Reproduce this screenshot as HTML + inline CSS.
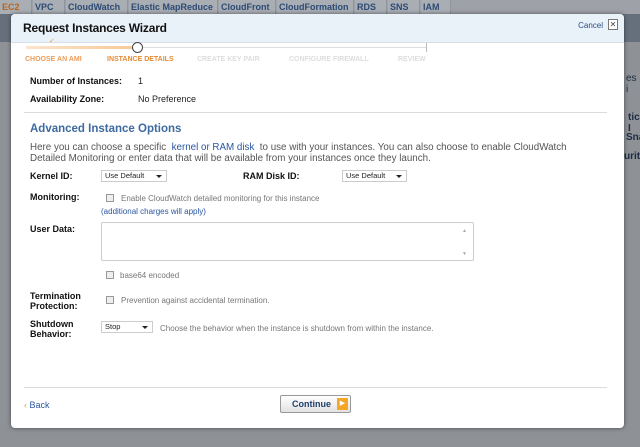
<!DOCTYPE html>
<html style="background:#8e9196"><head><style>
*{margin:0;padding:0;box-sizing:border-box}
html,body{width:640px;height:447px;overflow:hidden;background:#8e9196}
body{font-family:"Liberation Sans",Tahoma,sans-serif;position:relative;font-size:9px;color:#222}
.bg{position:absolute;left:0;top:0;width:640px;height:447px;background:#8e9196}
.tabs{position:absolute;left:0;top:0;width:640px;height:14px;background:#9ea2a8}
.tab{position:absolute;top:0;height:14px;font-size:9px;font-weight:bold;color:#2c4a74;line-height:14px;background:#a9aeb5;border-right:1px solid #8f959c;padding:0 2px}
.bgtext{position:absolute;color:#1d2c44;font-weight:bold;font-size:10px}
.modal{position:absolute;left:11px;top:14px;width:613px;height:414px;background:#fff;border-radius:4px;box-shadow:0 0 4px rgba(0,0,0,.5);overflow:hidden}
.hdr{height:29px;background:#e9f1f9;border-bottom:1px solid #d6dee8;position:relative}
.hdr h1{position:absolute;left:12px;top:7px;font-size:12px;font-weight:bold;color:#111;letter-spacing:-0.2px}
.cancel{position:absolute;right:21px;top:7px;font-size:8px;color:#2a4f8a}
.x{position:absolute;right:6px;top:5px;width:10px;height:11px;border:1px solid #777;font-size:8px;line-height:9px;text-align:center;color:#444;background:#fff}
.a{position:absolute}
.lbl{position:absolute;font-weight:bold;font-size:9px;color:#111;line-height:10px}
.sel{position:absolute;height:12px;border:1px solid #ccc;font-size:7.5px;line-height:10px;padding-left:3px;background:#fff}
.sel:after{content:"";position:absolute;right:4px;top:4px;border:3px solid transparent;border-top:3px solid #222}
.cb{position:absolute;width:8px;height:8px;border:1px solid #999;background:#eee}
.g{color:#777;font-size:8px}
.hr{position:absolute;left:13px;width:583px;height:1px;background:#dcdcdc}
</style></head><body>
<div class="bg"></div>
<div class="tabs">
<div class="tab" style="left:0;width:32px;color:#b8651f">EC2</div>
<div class="tab" style="left:33px;width:32px">VPC</div>
<div class="tab" style="left:66px;width:62px">CloudWatch</div>
<div class="tab" style="left:129px;width:89px">Elastic MapReduce</div>
<div class="tab" style="left:219px;width:57px">CloudFront</div>
<div class="tab" style="left:277px;width:77px">CloudFormation</div>
<div class="tab" style="left:355px;width:32px">RDS</div>
<div class="tab" style="left:388px;width:32px">SNS</div>
<div class="tab" style="left:421px;width:30px">IAM</div>
</div>
<div style="position:absolute;left:0;top:14px;width:640px;height:28px;background:#66707d"></div>
<div class="bgtext" style="left:626px;top:73px;font-weight:normal">es i</div>
<div class="bgtext" style="left:628px;top:112px">tic I</div>
<div class="bgtext" style="left:626px;top:132px">Sna</div>
<div class="bgtext" style="left:624px;top:151px">urity</div>
<div class="modal">
<div class="hdr"><h1>Request Instances Wizard</h1><span class="cancel">Cancel</span><div class="x">✕</div></div>
<div class="a" style="left:15px;top:32px;width:112px;height:3px;background:linear-gradient(90deg,#fbe4cc,#f8c896)"></div>
<div class="a" style="left:127px;top:33px;width:289px;height:1px;background:#ddd"></div>
<div class="a" style="left:415px;top:29px;width:1px;height:9px;background:#bbb"></div>
<div class="a" style="left:121px;top:28px;width:11px;height:11px;border:1.5px solid #444;border-radius:50%;background:#fff"></div>
<div class="a" style="left:38px;top:23px;font-size:7px;color:#e79a54">✓</div>
<div class="a" style="left:14px;top:42px;font-size:7px;font-weight:bold;color:#eb9c5a">CHOOSE AN AMI</div>
<div class="a" style="left:96px;top:42px;font-size:7px;font-weight:bold;color:#e68a32">INSTANCE DETAILS</div>
<div class="a" style="left:186px;top:42px;font-size:7px;font-weight:bold;color:#ddd">CREATE KEY PAIR</div>
<div class="a" style="left:278px;top:42px;font-size:7px;font-weight:bold;color:#ddd">CONFIGURE FIREWALL</div>
<div class="a" style="left:387px;top:42px;font-size:7px;font-weight:bold;color:#ddd">REVIEW</div>
<div class="lbl" style="left:19px;top:62px">Number of Instances:</div><div class="a" style="left:127px;top:62px;font-size:9px">1</div>
<div class="lbl" style="left:19px;top:80px">Availability Zone:</div><div class="a" style="left:127px;top:80px;font-size:9px">No Preference</div>
<div class="hr" style="top:98px"></div>
<div class="a" style="left:19px;top:109px;font-size:11.5px;font-weight:bold;color:#3d6aa0">Advanced Instance Options</div>
<div class="a" style="left:19px;top:128px;white-space:nowrap;font-size:9.8px;line-height:11px;color:#555">Here you can choose a specific &nbsp;<span style="color:#2a56a0">kernel or RAM disk</span>&nbsp; to use with your instances. You can also choose to enable CloudWatch<br>Detailed Monitoring or enter data that will be available from your instances once they launch.</div>
<div class="lbl" style="left:19px;top:157px">Kernel ID:</div>
<div class="sel" style="left:90px;top:156px;width:66px">Use Default</div>
<div class="lbl" style="left:232px;top:157px">RAM Disk ID:</div>
<div class="sel" style="left:331px;top:156px;width:65px">Use Default</div>
<div class="lbl" style="left:19px;top:178px">Monitoring:</div>
<div class="cb" style="left:95px;top:180px"></div>
<div class="a g" style="left:110px;top:180px">Enable CloudWatch detailed monitoring for this instance</div>
<div class="a" style="left:90px;top:193px;font-size:8px;color:#2a56a0">(additional charges will apply)</div>
<div class="lbl" style="left:19px;top:210px">User Data:</div>
<div class="a" style="left:90px;top:208px;width:373px;height:39px;border:1px solid #ccc;border-radius:2px"></div>
<div class="a" style="left:451px;top:214px;font-size:5px;color:#aaa">▲</div>
<div class="a" style="left:451px;top:237px;font-size:5px;color:#aaa">▼</div>
<div class="cb" style="left:95px;top:257px"></div>
<div class="a g" style="left:109px;top:257px">base64 encoded</div>
<div class="lbl" style="left:19px;top:277px">Termination<br>Protection:</div>
<div class="cb" style="left:95px;top:282px"></div>
<div class="a g" style="left:110px;top:282px">Prevention against accidental termination.</div>
<div class="lbl" style="left:19px;top:305px">Shutdown<br>Behavior:</div>
<div class="sel" style="left:90px;top:307px;width:52px">Stop</div>
<div class="a g" style="left:149px;top:310px">Choose the behavior when the instance is shutdown from within the instance.</div>
<div class="hr" style="top:373px;left:13px"></div>
<div class="a" style="left:13px;top:386px;font-size:9px;color:#2a56a0"><span style="color:#e79a54">‹</span> Back</div>
<div class="a" style="left:269px;top:381px;width:71px;height:18px;border:1px solid #999;border-radius:2px;background:linear-gradient(#fff,#e2e2e2)">
<span style="position:absolute;left:11px;top:3px;font-size:9px;font-weight:bold;color:#1f3f6e">Continue</span>
<span style="position:absolute;right:2px;top:2px;width:11px;height:12px;background:#f5a623;color:#fff;font-size:7px;line-height:12px;text-align:center">▶</span>
</div>
</div>
</body></html>
